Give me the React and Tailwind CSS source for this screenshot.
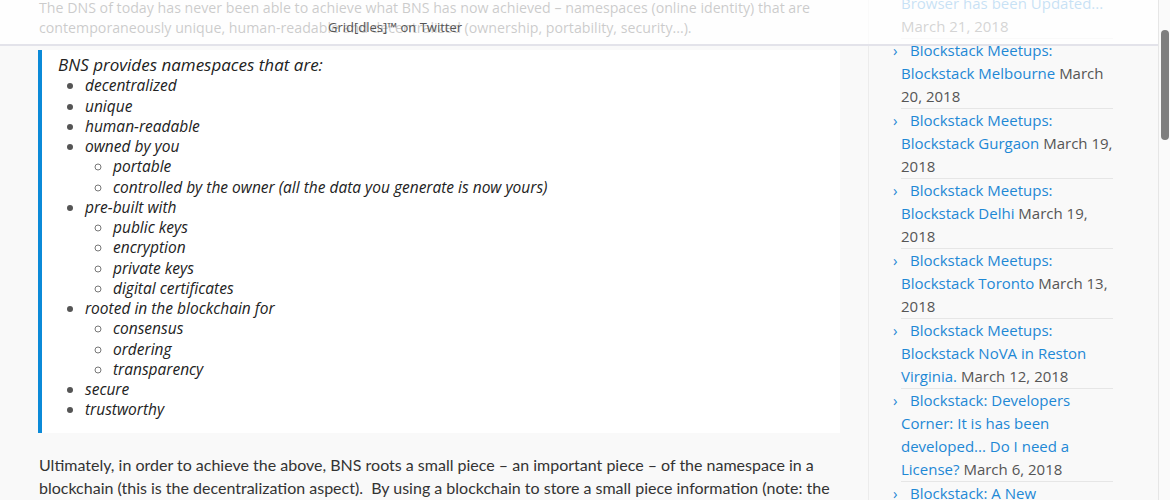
const bullets = [
    { text: 'decentralized' },
    { text: 'unique' },
    { text: 'human-readable' },
    { text: 'owned by you', sub: ['portable', 'controlled by the owner (all the data you generate is now yours)'] },
    { text: 'pre-built with', sub: ['public keys', 'encryption', 'private keys', 'digital certificates'] },
    { text: 'rooted in the blockchain for', sub: ['consensus', 'ordering', 'transparency'] },
    { text: 'secure' },
    { text: 'trustworthy' },
];

// each post: link lines (first line carries the chevron), then the date on the last line
const posts = [
    { lines: ['Blockstack Meetups:', 'Blockstack Melbourne'], date: 'March', dateRest: '20, 2018' },
    { lines: ['Blockstack Meetups:', 'Blockstack Gurgaon'], date: 'March 19,', dateRest: '2018' },
    { lines: ['Blockstack Meetups:', 'Blockstack Delhi'], date: 'March 19,', dateRest: '2018' },
    { lines: ['Blockstack Meetups:', 'Blockstack Toronto'], date: 'March 13,', dateRest: '2018' },
    { lines: ['Blockstack Meetups:', 'Blockstack NoVA in Reston', 'Virginia.'], date: 'March 12, 2018' },
    { lines: ['Blockstack: Developers', 'Corner: It is has been', 'developed... Do I need a', 'License?'], date: 'March 6, 2018' },
    { lines: ['Blockstack: A New'], date: '' },
];

const Post = ({ post }) => {
    const last = post.lines.length - 1;
    return (
        <li className="border-b border-[#e6e6e6]">
            {post.lines.map((line, i) => (
                <div key={i}>
                    {i === 0 && <span className="inline-block w-[17px] -ml-[8px] text-[#1e88d5]">›</span>}
                    <a className="text-[#1e88d5]">{line}</a>
                    {i === last && post.date && <span className="text-[#555]"> {post.date}</span>}
                </div>
            ))}
            {post.dateRest && <div className="text-[#555]">{post.dateRest}</div>}
        </li>
    );
};

const App = () => {
    return (
        <div className="relative w-[1170px] h-[500px] overflow-hidden bg-[#f9f9f9] flex">
            <div className="flex w-[1158px]">
                {/* main column */}
                <main className="w-[840px] pl-[39px] shrink-0">
                    <p className="-mt-[2px] text-[14.2px] leading-[20px] text-[#333] whitespace-nowrap" style={{ fontFamily: '"Open Sans", sans-serif' }}>
                        The DNS of today has never been able to achieve what BNS has now achieved – namespaces (online identity) that are<br />
                        contemporaneously unique, human-readable and decentralized (ownership, portability, security...).
                    </p>

                    <blockquote
                        className="mt-[12px] -ml-[1px] bg-white border-l-4 border-[#0b8ad8] pl-[16px] pt-[5px] pb-[14px] h-[383px] italic text-[15.5px] leading-[20.25px] text-[#222]"
                        style={{ fontFamily: '"Open Sans", sans-serif' }}
                    >
                        <div className="text-[17px]">BNS provides namespaces that are:</div>
                        <ul className="list-disc pl-[27px] marker:text-[#555]">
                            {bullets.map((b) => (
                                <li key={b.text}>
                                    {b.text}
                                    {b.sub && (
                                        <ul className="list-[circle] pl-[28px] marker:text-[#777]">
                                            {b.sub.map((s) => <li key={s}>{s}</li>)}
                                        </ul>
                                    )}
                                </li>
                            ))}
                        </ul>
                    </blockquote>

                    <p className="mt-[20px] text-[16px] leading-[23px] text-[#333] whitespace-nowrap" style={{ fontFamily: 'Lato, sans-serif' }}>
                        Ultimately, in order to achieve the above, BNS roots a small piece – an important piece – of the namespace in a<br />
                        blockchain (this is the decentralization aspect).&nbsp; By using a blockchain to store a small piece information (note: the
                    </p>
                </main>

                {/* sidebar */}
                <aside className="ml-[28px] flex-1 border-l border-[#ececec] pl-[32px]">
                    <ul className="w-[212px] -mt-[8px] text-[15px] leading-[23px]" style={{ fontFamily: '"Open Sans", sans-serif' }}>
                        <li className="border-b border-[#e6e6e6]">
                            <div className="text-[#1e88d5]">Browser has been Updated...</div>
                            <div className="text-[#555]">March 21, 2018</div>
                        </li>
                        {posts.map((p, i) => <Post key={i} post={p} />)}
                    </ul>
                </aside>
            </div>

            {/* scrollbar */}
            <div className="w-[12px] border-l border-[#e6e6e6] bg-[#fafafa] pt-[30px] pl-[2px]">
                <div className="w-[8px] h-[110px] rounded-full bg-[#7f7f7f]" />
            </div>

            {/* translucent sticky header over the content */}
            <div className="absolute top-0 left-0 w-[1158px] h-[46px] bg-white/75 border-b-2 border-[#e3e3ea]">
                <span className="absolute left-[328px] top-[18px] text-[13px] text-[#555]" style={{ fontFamily: '"Open Sans", sans-serif' }}>
                    Grid[dles]™ on Twitter
                </span>
            </div>
        </div>
    );
};

export default App;
